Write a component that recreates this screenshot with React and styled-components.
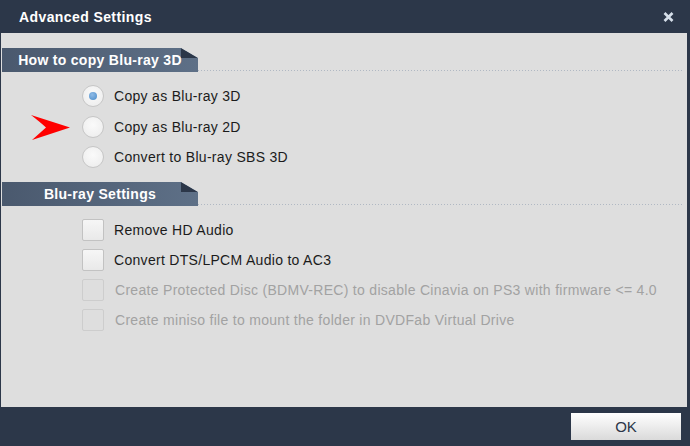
import styled, { createGlobalStyle } from 'styled-components';

const GlobalStyle = createGlobalStyle`
  html, body {
    margin: 0;
    padding: 0;
    background: #2c3749;
  }
  body {
    font-family: "Liberation Sans", Arial, sans-serif;
  }
`
const Window = styled.div`
  width: 690px;
  height: 446px;
  display: flex;
  flex-direction: column;
  background: #2c3749;
  overflow: hidden;
`
const TitleBar = styled.div`
  height: 33px;
  flex-shrink: 0;
  display: flex;
  align-items: center;
  justify-content: space-between;
  padding: 0 16px 0 19px;
  box-sizing: border-box;
`
const Title = styled.div`
  color: #ffffff;
  font-size: 14px;
  font-weight: bold;
  letter-spacing: 0.4px;
`
const CloseButton = styled.svg`
  display: block;
  cursor: pointer;
`
const Body = styled.div`
  flex: 1;
  margin: 0 3px 0 1px;
  background: #dedede;
  padding-top: 15px;
  display: flex;
  flex-direction: column;
`
const SectionRow = styled.div`
  display: flex;
  align-items: flex-end;
  height: 24px;
  margin-top: ${props => props.$gap || 0}px;
`
const SectionHeader = styled.div`
  position: relative;
  width: 196px;
  height: 24px;
  margin-left: 1px;
  background: linear-gradient(to right, #4a596e, #5e7087);
  clip-path: polygon(0 0, 179px 0, 196px 10px, 196px 100%, 0 100%);
  color: #ffffff;
  font-size: 14px;
  font-weight: bold;
  letter-spacing: 0.3px;
  display: flex;
  align-items: center;
  justify-content: center;
  &::after {
    content: '';
    position: absolute;
    top: 0;
    left: 179px;
    width: 17px;
    height: 10px;
    background: #2c3749;
    clip-path: polygon(0 0, 100% 100%, 0 100%);
  }
`
const DottedLine = styled.div`
  flex: 1;
  height: 1px;
  margin-bottom: 1px;
  margin-right: 3px;
  background-image: linear-gradient(to right, #b0b8c3 1px, transparent 1px);
  background-size: 3px 1px;
`
const OptionList = styled.div`
  display: flex;
  flex-direction: column;
  padding: 9px 0 0 80px;
`
const OptionRow = styled.div`
  position: relative;
  height: ${props => props.$h || 30}px;
  display: flex;
  align-items: center;
  gap: 10px;
  font-size: 14px;
  letter-spacing: 0.3px;
  color: ${props => props.$disabled ? '#a2a2a2' : '#1b1b1b'};
`
const Radio = styled.span`
  width: 22px;
  height: 22px;
  margin-left: 1px;
  box-sizing: border-box;
  border-radius: 50%;
  border: 1px solid #c6c6c6;
  background: radial-gradient(circle at 50% 40%, #fafafa, #ebebeb);
  display: flex;
  align-items: center;
  justify-content: center;
  &::after {
    content: '';
    display: ${props => props.$checked ? 'block' : 'none'};
    width: 8px;
    height: 8px;
    border-radius: 50%;
    background: radial-gradient(circle at 40% 35%, #8fbbe6, #4a8bc9);
  }
`
const Checkbox = styled.span`
  width: 22px;
  height: 22px;
  margin-left: 1px;
  box-sizing: border-box;
  border-radius: 2px;
  border: 1px solid ${props => props.$disabled ? '#cdcdcd' : '#c2c2c2'};
  background: ${props => props.$disabled ? '#dedede' : 'linear-gradient(#f6f6f6, #e9e9e9)'};
`
const Label = styled.span`
  padding-left: ${props => props.$indent || 0}px;
`
const Arrow = styled.svg`
  position: absolute;
  left: -50px;
  top: 4px;
`
const Footer = styled.div`
  height: 39px;
  flex-shrink: 0;
  display: flex;
  align-items: center;
  justify-content: flex-end;
  padding-right: 9px;
`
const OkButton = styled.button`
  width: 110px;
  height: 27px;
  border: none;
  border-radius: 0;
  background: linear-gradient(#ffffff, #dadada);
  color: #2c3749;
  font-family: "Liberation Sans", Arial, sans-serif;
  font-size: 15px;
  cursor: pointer;
`

const radios = [
  { label: 'Copy as Blu-ray 3D', checked: true },
  { label: 'Copy as Blu-ray 2D', arrow: true, h: 31 },
  { label: 'Convert to Blu-ray SBS 3D' },
];

const checks = [
  { label: 'Remove HD Audio' },
  { label: 'Convert DTS/LPCM Audio to AC3' },
  { label: 'Create Protected Disc (BDMV-REC) to disable Cinavia on PS3 with firmware <= 4.0', disabled: true },
  { label: 'Create miniso file to mount the folder in DVDFab Virtual Drive', disabled: true },
];

const App = () => {
  return <Window>
    <GlobalStyle />
    <TitleBar>
      <Title>Advanced Settings</Title>
      <CloseButton width="11" height="10" viewBox="0 0 11 10">
        <path d="M1.5 1 L9.5 9 M9.5 1 L1.5 9" stroke="#d6dfea" strokeWidth="2.6" strokeLinecap="butt" />
      </CloseButton>
    </TitleBar>
    <Body>
      <SectionRow>
        <SectionHeader>How to copy Blu-ray 3D</SectionHeader>
        <DottedLine />
      </SectionRow>
      <OptionList>
        {radios.map(r => (
          <OptionRow key={r.label} $h={r.h}>
            {r.arrow && (
              <Arrow width="40" height="26" viewBox="0 0 40 26">
                <path d="M0 0 L39 12.5 L1 25 Q10 17 15 12.5 Q9 7 0 0 Z" fill="#ff0000" />
              </Arrow>
            )}
            <Radio $checked={r.checked} />
            <Label>{r.label}</Label>
          </OptionRow>
        ))}
      </OptionList>
      <SectionRow $gap={10}>
        <SectionHeader>Blu-ray Settings</SectionHeader>
        <DottedLine />
      </SectionRow>
      <OptionList>
        {checks.map(c => (
          <OptionRow key={c.label} $disabled={c.disabled}>
            <Checkbox $disabled={c.disabled} />
            <Label $indent={c.disabled ? 1 : 0}>{c.label}</Label>
          </OptionRow>
        ))}
      </OptionList>
    </Body>
    <Footer>
      <OkButton>OK</OkButton>
    </Footer>
  </Window>
}
export default App;
